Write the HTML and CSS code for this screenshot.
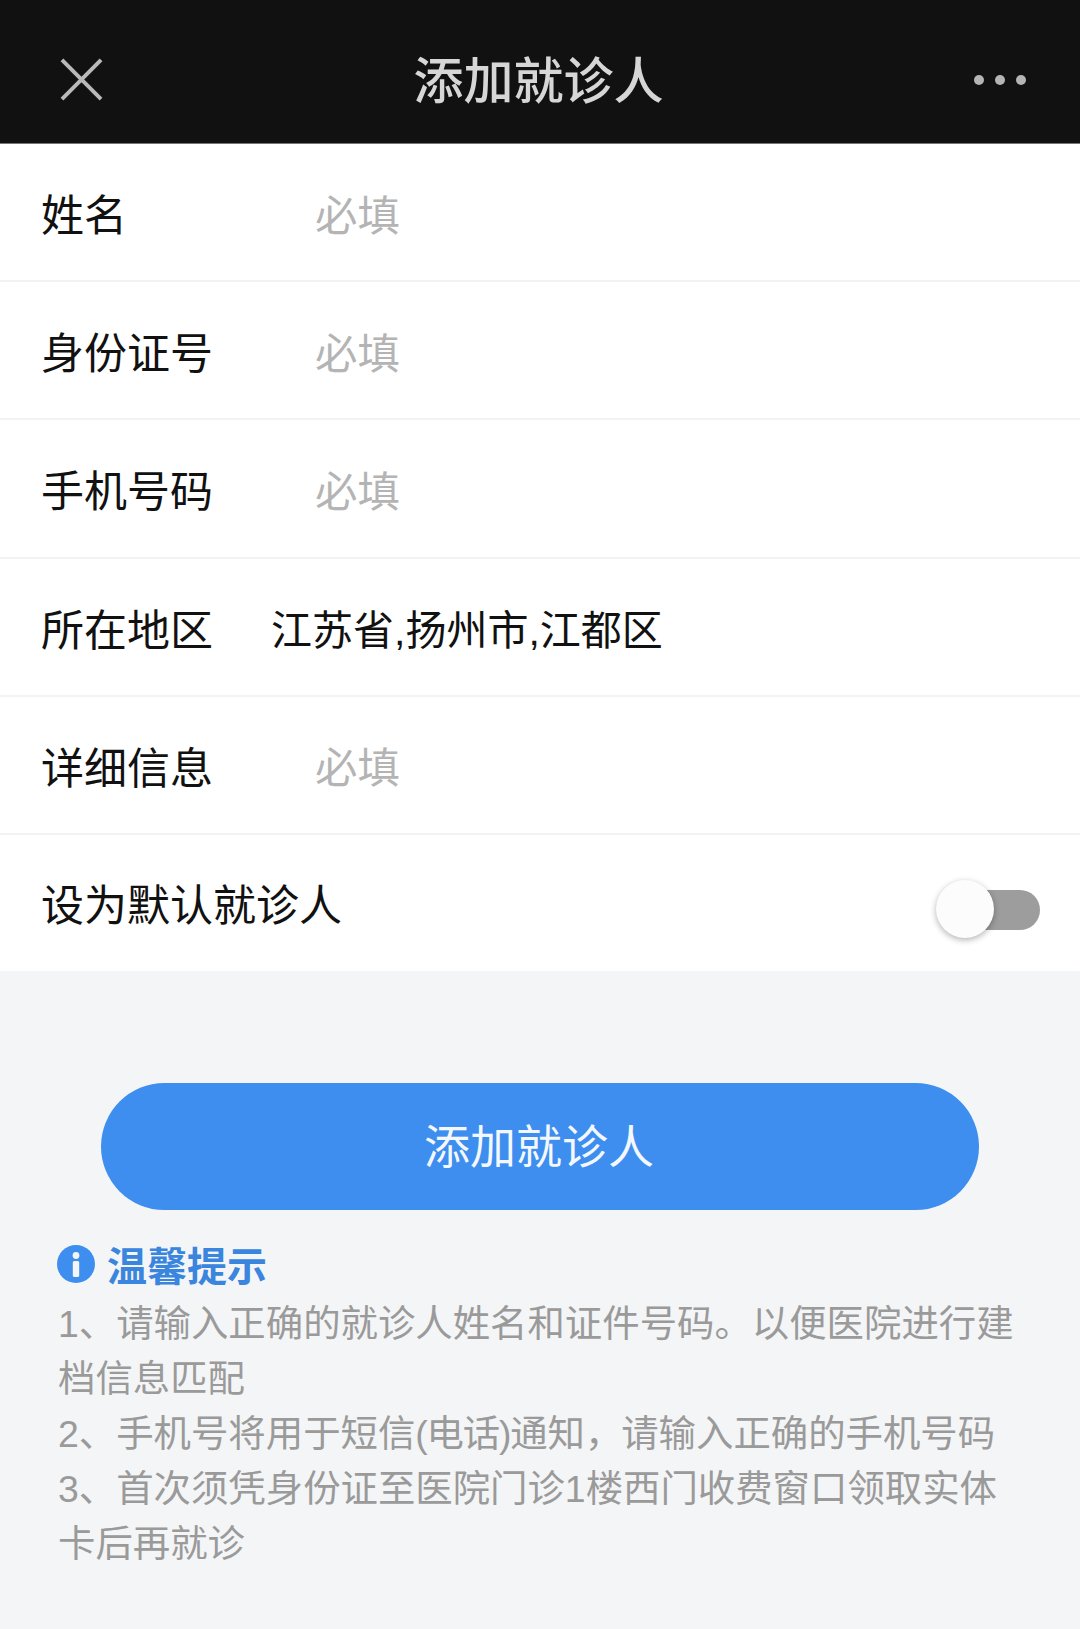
FILE: index.html
```html
<!DOCTYPE html>
<html lang="zh-CN">
<head>
<meta charset="utf-8">
<title>添加就诊人</title>
<link rel="stylesheet" href="styles.css">
</head>
<body>
<header class="topbar">
  <svg class="close" viewBox="0 0 44 44" aria-hidden="true"><path d="M2 2 L42 42 M42 2 L2 42"/></svg>
  <h1 class="title">添加就诊人</h1>
  <div class="dots"><i></i><i></i><i></i></div>
</header>
<main>
  <section class="form">
    <div class="row"><span class="label">姓名</span><span class="hint">必填</span></div>
    <div class="row"><span class="label">身份证号</span><span class="hint">必填</span></div>
    <div class="row"><span class="label">手机号码</span><span class="hint">必填</span></div>
    <div class="row"><span class="label">所在地区</span><span class="value">江苏省,扬州市,江都区</span></div>
    <div class="row"><span class="label">详细信息</span><span class="hint">必填</span></div>
    <div class="row last"><span class="label">设为默认就诊人</span><span class="switch"><span class="knob"></span></span></div>
  </section>
  <div class="action"><button class="submit">添加就诊人</button></div>
  <section class="tips">
    <div class="tips-head">
      <svg class="info" viewBox="0 0 38 38" aria-hidden="true"><circle cx="19" cy="19" r="19"/><circle class="mark" cx="19" cy="10.5" r="3.4"/><rect class="mark" x="15.8" y="16" width="6.4" height="16" rx="1.5"/></svg>
      <span>温馨提示</span>
    </div>
    <p>1、请输入正确的就诊人姓名和证件号码。以便医院进行建档信息匹配</p>
    <p>2、手机号将用于短信<span class="tight">(电话)</span>通知<span class="tight">，</span>请输入正确的手机号码</p>
    <p>3、首次须凭身份证至医院门诊1楼西门收费窗口领取实体卡后再就诊</p>
  </section>
</main>
</body>
</html>
```
FILE: styles.css
```css
* { box-sizing: border-box; }
html, body { margin: 0; padding: 0; }
body {
  width: 1080px;
  height: 1629px;
  overflow: hidden;
  background: #f4f5f6;
  font-family: "Liberation Sans", "Noto Sans CJK SC", sans-serif;
  color: #111;
}
.topbar {
  height: 144px;
  background: #111;
  border-bottom: 1px solid #777;
  display: flex;
  align-items: center;
  justify-content: space-between;
  padding: 16px 54px 0 60px;
  position: relative;
}
.close { width: 43px; height: 43px; }
.close path { stroke: #b9b9b9; stroke-width: 4; fill: none; }
.title {
  margin: 0;
  font-size: 50px;
  line-height: 60px;
  font-weight: 500;
  color: #d6d6d6;
  position: absolute;
  left: -3px;
  right: 0;
  top: 52px;
  text-align: center;
}
.dots { display: flex; gap: 11px; }
.dots i { width: 10px; height: 10px; border-radius: 50%; background: #b5b5b5; display: block; }
.form { background: #fff; }
.row {
  height: 138.2px;
  padding: 0 40px 0 41px;
  display: flex;
  align-items: center;
  border-bottom: 2px solid #f3f3f3;
  font-size: 43px;
}
.row.last { border-bottom: 0; height: 136px; padding-bottom: 2px; }
.label { width: 274px; flex: none; white-space: nowrap; color: #111; }
.row .value { margin-left: -44px; color: #111; font-size: 41px; }
.hint { color: #b4b4b4; font-size: 42.5px; }
.row.last .label { width: auto; flex: 1; }
.switch {
  width: 100px;
  height: 40px;
  background: #9d9d9d;
  border-radius: 20px;
  position: relative;
  margin-top: 16px;
  flex: none;
}
.knob {
  position: absolute;
  left: -4px;
  top: -10px;
  width: 58px;
  height: 58px;
  border-radius: 50%;
  background: #fcfcfc;
  box-shadow: 0 2px 6px rgba(0, 0, 0, .3);
}
.action { padding: 112px 101px 0; }
.submit {
  width: 100%;
  height: 127px;
  border: 0;
  border-radius: 64px;
  background: #3d8eee;
  color: #f4f8fe;
  font: inherit;
  font-size: 46px;
  padding: 0 2px 6px 0;
}
.tips { padding: 32px 58px 0; color: #9a9a9a; font-size: 37.4px; line-height: 54.9px; }
.tips p { margin: 0; }
.tight { letter-spacing: -1.2px; }
.tips-head {
  display: flex;
  align-items: center;
  gap: 12px;
  color: #3a85de;
  font-size: 40px;
  font-weight: 700;
  line-height: 50px;
  margin-bottom: 5px;
  margin-left: -1px;
}
.info { width: 38px; height: 38px; flex: none; margin-top: -6px; }
.info circle { fill: #3d8eee; }
.info .mark { fill: #f4f5f7; }
```
